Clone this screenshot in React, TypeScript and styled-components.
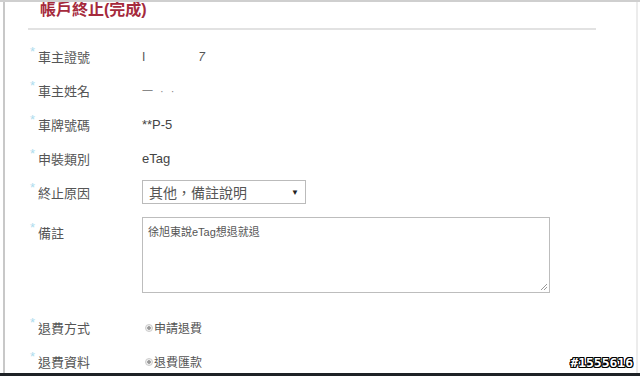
import { createGlobalStyle, styled } from "styled-components";

const GlobalStyle = createGlobalStyle`
  html, body {
    margin: 0;
    padding: 0;
    background: #fff;
  }
  body {
    font-family: "Liberation Sans", "Noto Sans CJK TC", sans-serif;
    color: #444;
  }
`;

interface Field {
  label: string;
  kind: "text" | "select" | "textarea" | "radio";
  value: string;
}

const fields: Field[] = [
  { label: "車主證號", kind: "text", value: "id" },
  { label: "車主姓名", kind: "text", value: "name" },
  { label: "車牌號碼", kind: "text", value: "**P-5" },
  { label: "申裝類別", kind: "text", value: "eTag" },
  { label: "終止原因", kind: "select", value: "其他，備註說明" },
  { label: "備註", kind: "textarea", value: "徐旭東說eTag想退就退" },
  { label: "退費方式", kind: "radio", value: "申請退費" },
  { label: "退費資料", kind: "radio", value: "退費匯款" },
];

function renderValue(field: Field) {
  if (field.value === "id") {
    return (
      <Redacted>
        <span>I</span>
        <Seven>7</Seven>
      </Redacted>
    );
  }
  if (field.value === "name") {
    return <Faint>一 · ·</Faint>;
  }
  switch (field.kind) {
    case "select":
      return (
        <Select>
          <span>{field.value}</span>
          <Caret>▼</Caret>
        </Select>
      );
    case "textarea":
      return (
        <TextArea>
          {field.value}
          <Grip viewBox="0 0 8 8">
            <path d="M7 1 L1 7 M7 4 L4 7" stroke="#999" strokeWidth="1" />
          </Grip>
        </TextArea>
      );
    case "radio":
      return (
        <RadioLabel>
          <RadioDot />
          {field.value}
        </RadioLabel>
      );
    default:
      return <Value>{field.value}</Value>;
  }
}

function App() {
  return (
    <>
      <GlobalStyle />
      <Screen>
        <Panel>
          <Header>
            <Title>帳戶終止(完成)</Title>
          </Header>
          <Form>
            {fields.map((field) => (
              <Row key={field.label} $tall={field.kind === "textarea"}>
                <Label $top={field.kind === "textarea"}>
                  <Star>*</Star>
                  {field.label}
                </Label>
                <Cell $top={field.kind === "textarea"}>{renderValue(field)}</Cell>
              </Row>
            ))}
          </Form>
        </Panel>
        <Watermark>#1555616</Watermark>
      </Screen>
    </>
  );
}

const Screen = styled.div`
  position: relative;
  width: 640px;
  height: 376px;
  box-sizing: border-box;
  border-top: 2px solid #cfcfcf;
  border-bottom: 3px solid #1e2226;
  padding-left: 3px;
  overflow: hidden;
`;

const Panel = styled.div`
  height: 100%;
  box-sizing: border-box;
  border-left: 2px solid #c8c8c8;
  border-right: 2px solid #ececec;
  margin-right: 2px;
`;

const Header = styled.div`
  margin-left: 23px;
  width: 568px;
  height: 26px;
  border-bottom: 2px solid #e2e2e2;
`;

const Title = styled.h1`
  margin: 0;
  padding: 0 0 0 12px;
  font-size: 16px;
  line-height: 16px;
  font-weight: bold;
  color: #a52a3c;
`;

const Form = styled.div`
  display: flex;
  flex-direction: column;
  padding-top: 9px;
`;

const Row = styled.div<{ $tall: boolean }>`
  display: grid;
  grid-template-columns: 112px 1fr;
  height: ${({ $tall }) => ($tall ? "101px" : "34px")};
  align-items: ${({ $tall }) => ($tall ? "start" : "center")};
  padding-left: 25px;
`;

const Label = styled.div<{ $top: boolean }>`
  display: flex;
  align-items: center;
  font-size: 13px;
  color: #555;
  padding-top: ${({ $top }) => ($top ? "14px" : "0")};
`;

const Star = styled.span`
  width: 8px;
  color: #aedcee;
  font-size: 13px;
  line-height: 10px;
  align-self: flex-start;
  margin-top: 0px;
`;

const Cell = styled.div<{ $top: boolean }>`
  padding-top: ${({ $top }) => ($top ? "8px" : "0")};
`;

const Value = styled.span`
  font-size: 13px;
  color: #444;
`;

const Redacted = styled.span`
  display: inline-flex;
  gap: 53px;
  font-size: 12px;
  color: #555;
`;

const Seven = styled.span`
  font-style: italic;
`;

const Faint = styled.span`
  font-size: 11px;
  color: #888;
  letter-spacing: 2px;
`;

const Select = styled.div`
  display: flex;
  align-items: center;
  justify-content: space-between;
  width: 164px;
  height: 24px;
  box-sizing: border-box;
  border: 1px solid #bbb;
  padding: 0 6px 0 6px;
  font-size: 14px;
  color: #555;
  background: #fff;
`;

const Caret = styled.span`
  font-size: 8px;
  color: #222;
`;

const TextArea = styled.div`
  position: relative;
  width: 408px;
  height: 76px;
  box-sizing: border-box;
  border: 1px solid #bdbdbd;
  padding: 5px 5px;
  font-size: 11px;
  color: #555;
`;

const Grip = styled.svg`
  position: absolute;
  right: 1px;
  bottom: 1px;
  width: 8px;
  height: 8px;
`;

const RadioLabel = styled.label`
  display: inline-flex;
  align-items: center;
  gap: 1px;
  font-size: 12px;
  color: #555;
  padding-left: 3px;
`;

const RadioDot = styled.span`
  width: 8px;
  height: 8px;
  box-sizing: border-box;
  border-radius: 50%;
  border: 1px solid #ccc;
  background: radial-gradient(circle, #999 0 1.5px, #eee 2px);
`;

const Watermark = styled.div`
  position: absolute;
  right: 7px;
  bottom: 3px;
  font-family: "DejaVu Sans Mono", monospace;
  font-weight: bold;
  font-size: 13px;
  color: #fff;
  text-shadow: -1px 0 #000, 1px 0 #000, 0 -1px #000, 0 1px #000, 1px 1px #000,
    -1px -1px #000, 1px -1px #000, -1px 1px #000;
`;

export default App;
